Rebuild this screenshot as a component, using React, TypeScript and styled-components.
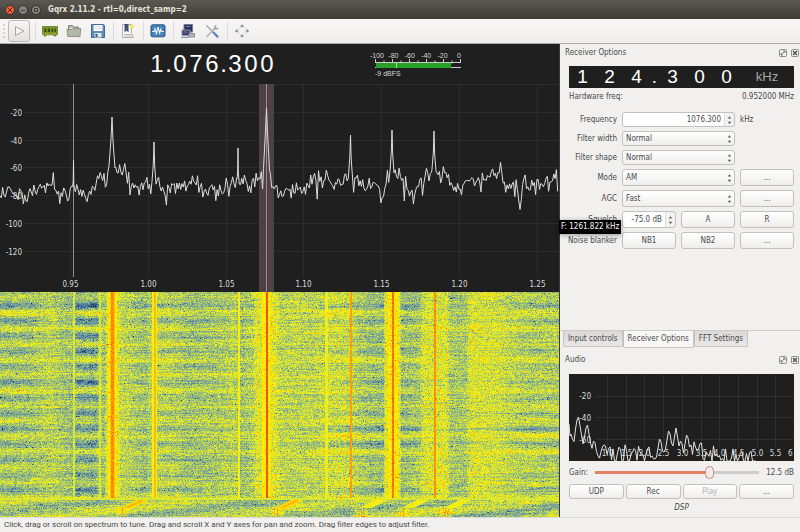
import React, { useId, useLayoutEffect, useRef, useState } from "react";
import styled, { createGlobalStyle, css } from "styled-components";

const UI_FONT = '"DejaVu Sans Condensed", "DejaVu Sans", sans-serif';
const LCD_FONT = '"Liberation Sans", Arial, sans-serif';
const DARK = "#1f1f1f";

const GlobalStyle = createGlobalStyle`
  * { box-sizing: border-box; }
  body { margin: 0; background: #f1f0ef; color: #4a4a4a; font: 8px/10px ${UI_FONT}; }
  button, input, select { font: inherit; color: inherit; margin: 0; padding: 0; }
`;

/* ---------- deterministic noise ---------- */

function makeRandom(seed: number) {
  let s = seed;
  return () => {
    s = (s + 0x6d2b79f5) | 0;
    let t = Math.imul(s ^ (s >>> 15), 1 | s);
    t = (t + Math.imul(t ^ (t >>> 7), 61 | t)) ^ t;
    return ((t ^ (t >>> 14)) >>> 0) / 4294967296;
  };
}

type Point = [number, number];

function interpolate(points: Point[], x: number) {
  for (let i = 1; i < points.length; i++) {
    const [x0, y0] = points[i - 1];
    const [x1, y1] = points[i];
    if (x <= x1) return y0 + ((y1 - y0) * (x - x0)) / (x1 - x0);
  }
  return points[points.length - 1][1];
}

/* ---------- window frame ---------- */

const Window = styled.div`
  display: flex;
  flex-direction: column;
  min-height: 100vh;
`;

const TitleBar = styled.header`
  display: flex;
  align-items: center;
  gap: 3px;
  height: 19px;
  padding-left: 5px;
  background: linear-gradient(#5a5850, #3d3c37);
  color: #e6e2da;
`;

const Title = styled.h1`
  margin: 0 0 0 4px;
  font-size: 8px;
  font-weight: 700;
`;

const WindowButton = styled.button<{ $close?: boolean }>`
  display: grid;
  place-items: center;
  width: 10px;
  height: 10px;
  border: 1px solid #35342f;
  border-radius: 50%;
  background: ${p => (p.$close ? "#ec5f3b" : "#84827a")};
  color: ${p => (p.$close ? "#6b2413" : "#3c3b37")};
`;

const ToolBar = styled.nav`
  display: flex;
  align-items: center;
  height: 25px;
  padding-left: 3px;
  border-bottom: 1px solid #a9aca8;
  background: linear-gradient(#f8f7f6, #efeeed);
`;

const Handle = styled.span`
  width: 2px;
  height: 14px;
  margin-right: 3px;
  border-left: 2px dotted #d4d2d0;
`;

const PlayButton = styled.button`
  display: grid;
  place-items: center;
  width: 22px;
  height: 22px;
  margin-right: 2px;
  border: 1px solid #bcbab8;
  border-radius: 3px;
  background: linear-gradient(#f7f6f5, #e2e1e0);
`;

const ToolButton = styled.button`
  display: grid;
  place-items: center;
  width: 24px;
  height: 22px;
  border: 0;
  background: none;
`;

const Separator = styled.span`
  width: 1px;
  height: 20px;
  margin: 0 2px 0 3px;
  background: #dddbd9;
`;

const Workspace = styled.main`
  display: grid;
  flex: 1;
  grid-template-columns: minmax(0, 1fr) 240px;
`;

const Receiver = styled.section`
  display: flex;
  flex-direction: column;
  min-width: 0;
  border-right: 1px solid #3a3a3a;
  background: ${DARK};
`;

const TuningRow = styled.div`
  display: flex;
  align-items: center;
  gap: 91px;
  height: 40px;
  padding-left: 149px;
  color: #fff;
  font-family: ${LCD_FONT};
`;

const Digits = styled.div`
  display: flex;
  font-size: 24px;
  line-height: 28px;
`;

const Digit = styled.span<{ $dot: boolean }>`
  width: ${p => (p.$dot ? 7 : 16)}px;
  text-align: center;
`;

const MeterSvg = styled.svg`
  display: block;
  width: 98px;
  height: 32px;
  flex: none;
`;

const PlotSvg = styled.svg`
  display: block;
  width: 100%;
  height: auto;
`;

const WaterfallCanvas = styled.canvas`
  display: block;
  flex: 1 1 225px;
  width: 100%;
  min-height: 0;
`;

const StatusBar = styled.footer`
  height: 15px;
  padding: 2px 4px;
  border-top: 1px solid #dcdad8;
  font-family: Roboto, sans-serif;
  white-space: nowrap;
  overflow: hidden;
`;

/* ---------- dock panels ---------- */

const Docks = styled.aside`
  position: relative;
  display: flex;
  flex-direction: column;
  justify-content: space-between;
`;

const Dock = styled.section`
  padding: 0 6px 0 9px;
`;

const DockHeader = styled.header`
  display: flex;
  align-items: center;
  gap: 4px;
  height: 18px;
  margin: 0 -5px 0 -4px;
`;

const DockTitle = styled.h2`
  flex: 1;
  margin: 0;
  font-size: 8px;
  font-weight: 400;
`;

const DockButton = styled.button`
  width: 8px;
  height: 8px;
  border: 0;
  background: none;
  line-height: 0;
`;

const Lcd = styled.div`
  display: grid;
  grid-template-columns: repeat(3, 12fr) 4fr repeat(3, 12fr) 24fr;
  align-items: center;
  height: 22px;
  margin-top: 4px;
  background: ${DARK};
  color: #fff;
  font: 19px/22px ${LCD_FONT};
  text-align: center;
`;

const LcdUnit = styled.span`
  color: #a5a5a5;
  font-size: 13px;
`;

const HardwareRow = styled.div`
  display: flex;
  justify-content: space-between;
  height: 24px;
  padding-top: 4px;
`;

const Form = styled.form`
  display: grid;
  grid-template-columns: 48px repeat(3, minmax(0, 1fr));
  grid-template-rows: repeat(3, 15px) repeat(4, 17px);
  gap: 4px 5px;
  align-items: center;
`;

const Label = styled.label`
  grid-column: 1;
  justify-self: end;
  white-space: nowrap;
`;

const fieldFrame = css`
  border: 1px solid #c3c1bf;
  border-radius: 3px;
`;

const Field = styled.span<{ $span?: number }>`
  position: relative;
  display: flex;
  grid-column: span ${p => p.$span || 1};
  height: 100%;
  svg { position: absolute; right: 3px; top: calc(50% - 5px); pointer-events: none; }
`;

const Select = styled.select`
  ${fieldFrame}
  width: 100%;
  height: 100%;
  padding: 0 12px 0 3px;
  appearance: none;
  background: linear-gradient(#ffffff, #f0efee);
`;

const SpinInput = styled.input`
  ${fieldFrame}
  width: 100%;
  height: 100%;
  padding-right: 13px;
  background: linear-gradient(to left, #f2f1f0 9px, #dddbd9 9px, #dddbd9 10px, #fff 10px);
  text-align: right;
`;

const Button = styled.button`
  ${fieldFrame}
  width: 100%;
  height: 100%;
  background: linear-gradient(#ffffff, #efeeed);
  &:disabled { color: #b4b2b0; }
`;

const TabList = styled.div`
  display: flex;
  align-items: flex-start;
  height: 21px;
  padding-left: 3px;
  border-top: 1px solid #cfcdcb;
`;

const Tab = styled.button<{ $active: boolean }>`
  height: ${p => (p.$active ? 17 : 16)}px;
  padding: 0 4px;
  border: 1px solid #c5c3c1;
  border-top: 0;
  border-radius: 0 0 2px 2px;
  background: ${p => (p.$active ? "#f8f7f6" : "linear-gradient(#dbd9d7, #e9e8e7)")};
  white-space: nowrap;
`;

const Tooltip = styled.div`
  position: absolute;
  top: 176px;
  left: -1px;
  padding: 2px 2px;
  background: #000;
  box-shadow: 0 1px 5px rgba(0, 0, 0, 0.4);
  color: #fff;
  white-space: nowrap;
`;

const AudioPlot = styled(PlotSvg)`
  margin-top: 5px;
  background: ${DARK};
`;

const GainRow = styled.div`
  display: flex;
  align-items: center;
  gap: 7px;
  height: 23px;
`;

const Slider = styled.input`
  flex: 1;
  min-width: 0;
  height: 14px;
  appearance: none;
  background: linear-gradient(to right, #e58065 var(--fill), #cfcdcb var(--fill)) center / 100% 3px no-repeat;
  &::-webkit-slider-thumb {
    appearance: none;
    width: 9px;
    height: 13px;
    border: 1px solid #c08c80;
    border-radius: 5px;
    background: #f3ebe9;
  }
`;

const ButtonRow = styled.div`
  display: grid;
  grid-template-columns: repeat(4, minmax(0, 1fr));
  gap: 2px;
  height: 15px;
`;

const DspButton = styled.button`
  display: block;
  width: 100%;
  height: 18px;
  border: 0;
  background: none;
  font-style: italic;
`;

/* ---------- icons ---------- */

const Icon = ({ children, size = 16 }: { children: React.ReactNode; size?: number }) => (
  <svg width={size} height={size} viewBox="0 0 16 16" fill="none" aria-hidden="true">{children}</svg>
);

const PlayIcon = () => <Icon><path d="M4.5 3.5 13 8l-8.500 4.500z" fill="#f5f5f5" stroke="#a5a5a5" /></Icon>;

const ChipIcon = () => (
  <Icon>
    <path d="M.5 3.500h15v8h-1.500v1.500h-2v-1.200H4V13H2v-1.500H.5z" fill="#789623" stroke="#59731a" strokeWidth=".7" />
    <path d="M2.500 5.500h2v3.500h-2zM6 5.500h2v3.500H6zM9.500 5.500h1.700v3.500H9.500zM12.500 5.500H14v3.500h-1.500z" fill="#394c12" />
    <path d="M1 11h13" stroke="#c9c34b" strokeDasharray="1 1" />
  </Icon>
);

const FolderIcon = () => (
  <Icon>
    <path d="M2.500 12V2.500h4l1 1.500h5v8z" fill="#b8bbb0" stroke="#80857a" />
    <path d="M4 5.500h8" stroke="#eceee8" />
    <path d="M.8 6.500H6l1-1h7.800l-.8 8H1.800z" fill="#b0b9a5" stroke="#7d8675" strokeWidth=".8" />
  </Icon>
);

const SaveIcon = () => (
  <Icon>
    <path d="M1.500 1.500h12l1 1v12h-13z" fill="#5f8cba" stroke="#41699a" />
    <path d="M3.500 2h9v6h-9z" fill="#fff" />
    <path d="M4.500 3.500h7m-7 2h7" stroke="#d6dde5" />
    <path d="M4.500 10h7v4.500h-7z" fill="#e4e8ec" />
    <path d="M5.500 11h2v3h-2z" fill="#335c89" />
  </Icon>
);

const BookmarkIcon = () => (
  <Icon>
    <path d="M2.500 1.500h9v9l2 4h-11z" fill="#f7f7f5" stroke="#a2a29c" strokeWidth=".8" />
    <path d="M4.500 1h4v8.500l-2-2-2 2z" fill="#3f4f76" />
    <path d="m12 .5.9 1.800 2 .3-1.500 1.400.4 2-1.800-1-1.800 1 .4-2L9.200 2.600l2-.3z" fill="#f4e94b" />
    <path d="M4 11.500h7m-7 1.500h8" stroke="#bcbcb7" />
  </Icon>
);

const WaveIcon = () => (
  <Icon>
    <rect x="1" y="1.800" width="14" height="12" rx="1.500" fill="#4179b2" stroke="#2b568b" />
    <path d="M2 5h12M2 11h12M5 2.500v11M11 2.500v11" stroke="#6e9dca" strokeWidth=".6" />
    <path d="M2 8.500h2l1-2.500 1.500 4.500L8 4l1.500 6 1.300-3.500 1 2H14" stroke="#f2f8ff" strokeWidth="1.100" />
  </Icon>
);

const MonitorsIcon = () => (
  <Icon>
    <path d="M4 1.500h8.500v7.500H4z" fill="#2b3461" stroke="#777986" />
    <path d="M2 7h8v5.500H2z" fill="#3f4374" stroke="#8d8e98" />
    <path d="M9 10.500h5.500V14H9z" fill="#b5b6ba" stroke="#8b8c90" />
    <path d="M1 14.300h8M6 3.500h4.500M4 9h3" stroke="#7580b5" />
  </Icon>
);

const ToolsIcon = () => (
  <Icon>
    <path d="m2.500 2.500 6 6" stroke="#9da2a6" strokeWidth="1.100" strokeLinecap="round" />
    <path d="m9.500 9.500 4 4.200" stroke="#5d8ac2" strokeWidth="2.400" strokeLinecap="round" />
    <path d="M3 13.500 11 5" stroke="#b2b7b8" strokeWidth="1.800" strokeLinecap="round" />
    <path d="M10 5.500c-.5-2 .8-3.500 2.500-3.800L11.800 4l1 .9 2-.7c-.2 1.900-2 2.900-3.800 2.500" fill="#a6abaa" />
  </Icon>
);

const FullscreenIcon = () => (
  <Icon>
    <path d="M8 1.200 6 3.700h4zM8 14.800l-2-2.500h4zM.8 8l2.700-2v4zM15.200 8l-2.700-2v4z" fill="#76819a" />
    <circle cx="8" cy="8" r="3.600" stroke="#bcc3cd" strokeWidth=".8" strokeDasharray="1 1" />
  </Icon>
);

const FloatIcon = () => (
  <Icon size={8}>
    <rect x="1" y="1" width="14" height="14" rx="2" stroke="#777" strokeWidth="1.600" />
    <path d="M8 4h4v4M4 8v4h4M12 4l-8 8" stroke="#666" strokeWidth="1.600" />
  </Icon>
);

const CloseIcon = () => (
  <Icon size={8}>
    <rect x="1" y="1" width="14" height="14" rx="2" stroke="#777" strokeWidth="1.600" />
    <path d="m4 4 8 8m0-8-8 8" stroke="#444" strokeWidth="2.400" />
  </Icon>
);

const Arrows = () => (
  <svg width="5" height="10" viewBox="0 0 5 10" aria-hidden="true">
    <path d="M.8 3.500 2.500 1.200l1.700 2.300zM.8 6.800h3.400L2.500 9z" fill="#5a5a5a" />
  </svg>
);

const WindowGlyph = ({ d }: { d: string }) => (
  <svg width="6" height="6" viewBox="0 0 6 6" aria-hidden="true"><path d={d} fill="none" stroke="currentColor" /></svg>
);

/* ---------- signal meter ---------- */

function SignalMeter() {
  return (
    <MeterSvg viewBox="0 0 98 32" role="img" aria-label="Signal level">
      <g fill="#d8d8d8" fontSize="7" textAnchor="middle" fontFamily={LCD_FONT}>
        {[-100, -80, -60, -40, -20, 0].map((v, i) => (
          <text key={v} x={11 + i * 16.400} y="10">{v}</text>
        ))}
      </g>
      <path
        d={Array.from({ length: 11 }, (_, i) => `M${9.500 + i * 8.500} ${i % 2 ? 12.500 : 11}v3`).join("") + "M9 14.500h86M9 19.500h86"}
        stroke="#c9c9c9"
      />
      <path d="M10 15h75v5H10z" fill="#27a127" />
      <path d="M30.500 14v6" stroke="#a9e080" />
      <text x="9" y="28" fill="#d8d8d8" fontSize="7" fontFamily={LCD_FONT}>-9 dBFS</text>
    </MeterSvg>
  );
}

/* ---------- spectrum ---------- */

const FLOOR: Point[] = [
  [0, 110], [12, 107], [18, 114], [30, 110], [38, 103], [45, 101], [54, 96], [59, 109], [68, 112], [74, 106], [84, 110],
  [94, 109], [98, 90], [103, 97], [109, 86], [117, 86], [121, 95], [125, 84], [130, 98], [140, 103], [150, 101],
  [160, 102], [170, 104], [180, 99], [195, 98], [205, 110], [220, 104], [235, 100], [243, 97], [250, 106], [258, 94],
  [262, 86], [270, 90], [276, 106], [285, 108], [296, 107], [310, 97], [325, 93], [337, 101], [345, 92], [356, 98],
  [370, 104], [382, 110], [387, 90], [399, 92], [405, 98], [412, 107], [420, 100], [425, 90], [443, 88], [450, 96],
  [460, 108], [466, 95], [480, 97], [488, 94], [501, 86], [506, 106], [512, 100], [520, 108], [526, 98], [535, 102],
  [550, 101], [556, 92], [560, 110],
];

const CARRIERS: [number, number, number][] = [
  [73.500, 76, 1], [112, 33, 3], [154, 58, 2], [238, 64, 1], [266.500, 24, 3], [350.500, 51, 2], [392, 46, 2], [434, 47, 2],
];

function buildSpectrum() {
  const random = makeRandom(41);
  const points: Point[] = [];
  for (let x = 0; x <= 559; x += 1.300) {
    const spike = random() > 0.95 ? 10 : 0;
    points.push([x, interpolate(FLOOR, x) + (random() + random() - 1) * 12 + spike]);
  }
  const kept = points.filter(([x]) => !CARRIERS.some(([cx, , w]) => Math.abs(x - cx) < w));
  CARRIERS.forEach(([cx, top, w]) => {
    const base = interpolate(FLOOR, cx);
    kept.push([cx - w, base - 4], [cx - w / 3, top + 22], [cx, top], [cx + w / 3, top + 24], [cx + w, base - 2]);
  });
  kept.sort((a, b) => a[0] - b[0]);
  return "M" + kept.map(([x, y]) => `${x.toFixed(1)} ${y.toFixed(1)}`).join("L");
}

const SPECTRUM_PATH = buildSpectrum();
const MHZ = ["0.95", "1.00", "1.05", "1.10", "1.15", "1.20", "1.25"];
const LEVELS = [-20, -40, -60, -80, -100, -120];

function Spectrum() {
  const gridX = (i: number) => Math.round(70 + i * 77.750) + 0.500;
  const gridY = (i: number) => Math.round(28 + i * 27.700) + 0.500;
  return (
    <PlotSvg viewBox="0 0 559 208" role="img" aria-label="Radio spectrum">
      <path
        d={MHZ.map((_, i) => `M${gridX(i)} 0V193`).join("") + LEVELS.map((_, i) => `M24 ${gridY(i)}H559`).join("") + "M0 .5H559"}
        stroke="#2c2c2c"
      />
      <rect x="259" width="15" height="208" fill="#4d4145" />
      <path d="M266.500 0V208" stroke="#a58a8a" />
      <path d="M73.500 0V193" stroke="#8c9092" />
      <g fill="#dadada" fontSize="8" fontFamily={UI_FONT}>
        {LEVELS.map((v, i) => <text key={v} x="22" y={gridY(i) + 3} textAnchor="end">{v}</text>)}
        {MHZ.map((v, i) => <text key={v} x={gridX(i)} y="203" textAnchor="middle">{v}</text>)}
      </g>
      <path d={SPECTRUM_PATH} fill="none" stroke="#dcdcdc" strokeWidth="1" strokeLinejoin="round" />
    </PlotSvg>
  );
}

/* ---------- waterfall ---------- */

const PALETTE: [number, number, number, number][] = [
  [0, 30, 50, 70], [0.140, 65, 110, 165], [0.300, 110, 155, 160], [0.460, 155, 190, 120],
  [0.600, 208, 226, 60], [0.720, 248, 244, 12], [0.850, 255, 195, 0], [0.930, 255, 140, 0], [1, 240, 80, 15],
];

function paletteColor(value: number) {
  const v = Math.max(0, Math.min(1, value));
  for (let i = 1; i < PALETTE.length; i++) {
    if (v <= PALETTE[i][0]) {
      const a = PALETTE[i - 1];
      const b = PALETTE[i];
      const t = (v - a[0]) / (b[0] - a[0]);
      return [1, 2, 3].map(k => a[k] + (b[k] - a[k]) * t);
    }
  }
  return [240, 80, 15];
}

/* average level of the noise floor along the frequency axis */
const LEVEL: Point[] = [
  [0, 0.480], [30, 0.490], [50, 0.560], [60, 0.510], [72, 0.480], [76, 0.430], [96, 0.430], [99, 0.560], [104, 0.480],
  [107, 0.690], [117, 0.690], [120, 0.580], [128, 0.550], [145, 0.480], [152, 0.570], [160, 0.540], [180, 0.530],
  [185, 0.480], [215, 0.510], [235, 0.560], [240, 0.490], [252, 0.540], [256, 0.660], [275, 0.670], [280, 0.560],
  [310, 0.560], [330, 0.600], [345, 0.600], [355, 0.550], [365, 0.500], [383, 0.460], [385, 0.700], [399, 0.700],
  [401, 0.470], [419, 0.510], [423, 0.630], [446, 0.650], [450, 0.500], [465, 0.510], [470, 0.640], [495, 0.610],
  [510, 0.560], [530, 0.530], [560, 0.530],
];

/* strength of the slow fading bands */
const FADING: Point[] = [
  [0, 0.150], [30, 0.120], [48, 0.050], [74, 0.060], [77, 0.200], [97, 0.200], [100, 0.050], [126, 0.030], [132, 0.080],
  [146, 0.080], [150, 0.040], [160, 0.110], [180, 0.090], [215, 0.050], [240, 0.060], [252, 0.060], [256, 0.010],
  [310, 0.020], [325, 0.070], [383, 0.110], [385, 0], [399, 0], [401, 0.110], [418, 0.080], [424, 0.020],
  [490, 0.020], [515, 0.080], [560, 0.100],
];

/* x, half width, level */
const TRACES: [number, number, number][] = [
  [73.500, 1, 0.620], [112, 4, 0.740], [112, 2, 0.830], [112, 1, 0.930], [154, 2, 0.690], [154.500, 1, 0.860],
  [238.500, 1, 0.730], [266, 4, 0.740], [266.500, 1, 1], [326, 1, 0.680], [350.500, 1, 0.900], [392.500, 5, 0.740],
  [392.500, 1, 0.960], [434.500, 1, 0.920], [99.500, 1, 0.610],
];

function paintWaterfall(ctx: CanvasRenderingContext2D, width: number, height: number) {
  const random = makeRandom(7);
  const image = ctx.createImageData(width, height);
  const shiftRow = 206;
  const bandStrength = Array.from({ length: 20 }, () => [0.500 + random(), 0.300 + random() * 1.300]);
  for (let y = 0; y < height; y++) {
    const shifted = y >= shiftRow;
    const rowJitter = (random() - 0.500) * 0.080;
    const [leftBand, rightBand] = bandStrength[Math.floor((y + 5) / 15.400)];
    const streakStart = random() * width;
    const streakLength = 40 + random() * 80;
    let drift = 0;
    for (let x = 0; x < width; x++) {
      drift = drift * 0.880 + (random() - 0.500) * 0.080;
      const phase = (y * 2 * Math.PI) / 15.400;
      const band = x < 270 ? leftBand : rightBand;
      let v: number;
      if (shifted) {
        v = 0.520 + 0.100 * Math.sin(x / 27 + (y - shiftRow) / 3) + rowJitter;
      } else {
        v = interpolate(LEVEL, x) - interpolate(FADING, x) * band * Math.cos(phase - 5.300) + rowJitter;
      }
      if (x > streakStart && x < streakStart + streakLength) v -= 0.050;
      v += drift + (random() + random() - 1) * 0.210;
      if (random() > 0.970) v -= 0.250;
      if (!shifted) {
        TRACES.forEach(([tx, half, level]) => {
          if (Math.abs(x - tx) <= half) v = Math.max(v, level + (random() - 0.500) * 0.060);
        });
      } else {
        [122, 277, 361, 403, 445].forEach(tx => {
          const distance = Math.abs(x - tx);
          if (y > shiftRow + 9 && distance <= 6) v += 0.120;
          if (y > shiftRow + 9 && distance < 1) v = 0.910;
          const slant = Math.abs(x - (tx + 17 - (y - shiftRow - 3) * 2));
          if (y > shiftRow + 1 && y <= shiftRow + 9 && slant < 7) {
            v = Math.max(v, (tx > 300 ? 0.760 : 0.880) - slant * 0.020 + (random() - 0.500) * 0.080);
          }
        });
        if (y < shiftRow + 2) v = Math.max(v, 0.620);
      }
      const [r, g, b] = paletteColor(v);
      const at = (y * width + x) * 4;
      image.data[at] = r;
      image.data[at + 1] = g;
      image.data[at + 2] = b;
      image.data[at + 3] = 255;
    }
  }
  ctx.putImageData(image, 0, 0);
}

function Waterfall() {
  const ref = useRef<HTMLCanvasElement>(null);
  useLayoutEffect(() => {
    const canvas = ref.current;
    const ctx = canvas?.getContext("2d");
    if (canvas && ctx) paintWaterfall(ctx, canvas.width, canvas.height);
  }, []);
  return <WaterfallCanvas ref={ref} width={559} height={225} role="img" aria-label="Waterfall" />;
}

/* ---------- audio spectrum ---------- */

const AUDIO_ENVELOPE: Point[] = [
  [0, 68], [20, 70], [28, 78], [60, 80], [85, 80], [90, 70], [96, 73], [104, 72], [112, 68], [122, 72], [128, 76],
  [140, 80], [180, 84], [187, 88], [225, 96],
];

const AUDIO_PEAKS: [number, number][] = [[9, 40], [18, 48], [91, 62], [100, 54], [107, 54], [118, 58]];

function buildAudioTrace() {
  const random = makeRandom(19);
  const points: Point[] = [[0, 50], [1, 62]];
  for (let x = 2; x < 187; x += 1.500) {
    const near = AUDIO_PEAKS.find(([px]) => Math.abs(px - x) < 4);
    let y = interpolate(AUDIO_ENVELOPE, x) + (random() - 0.500) * 18;
    if (near) y = near[1] + Math.abs(near[0] - x) * 6;
    points.push([x, Math.min(y, 87)]);
  }
  return "M" + points.map(([x, y]) => `${x} ${y.toFixed(1)}`).join("L");
}

const AUDIO_PATH = buildAudioTrace();
const KHZ = ["1.0", "1.5", "2.0", "2.5", "3.0", "3.5", "4.0", "4.5", "5.0", "5.5"];

function AudioSpectrum() {
  const gridX = (i: number) => Math.round(38 + i * 18.700) + 0.500;
  return (
    <AudioPlot viewBox="0 0 225 87" role="img" aria-label="Audio spectrum">
      <path d={KHZ.map((_, i) => `M${gridX(i)} 0V74`).join("") + "M26 22.500H225M26 43.500H225M26 65.500H225"} stroke="#2f2f2f" />
      <g fill="#dadada" fontSize="8" fontFamily={UI_FONT}>
        {[-20, -40, -60].map((v, i) => <text key={v} x="22" y={25 + i * 22} textAnchor="end">{v}</text>)}
        {KHZ.map((v, i) => <text key={v} x={gridX(i)} y="82" textAnchor="middle">{v}</text>)}
        <text x="219" y="82">6</text>
      </g>
      <path d={AUDIO_PATH} fill="none" stroke="#e2e2e2" />
    </AudioPlot>
  );
}

/* ---------- form parts ---------- */

function Choice({ label, value, options }: { label: string; value: string; options: string[] }) {
  const id = useId();
  return (
    <>
      <Label htmlFor={id}>{label}</Label>
      <Field $span={2}>
        <Select id={id} defaultValue={value}>
          {options.map(o => <option key={o}>{o}</option>)}
        </Select>
        <Arrows />
      </Field>
    </>
  );
}

function Spin({ label, value, span }: { label: string; value: string; span: number }) {
  const id = useId();
  return (
    <>
      <Label htmlFor={id}>{label}</Label>
      <Field $span={span}>
        <SpinInput id={id} defaultValue={value} />
        <Arrows />
      </Field>
    </>
  );
}

function DockTop({ title }: { title: string }) {
  return (
    <DockHeader>
      <DockTitle>{title}</DockTitle>
      <DockButton aria-label={`Float ${title}`}><FloatIcon /></DockButton>
      <DockButton aria-label={`Close ${title}`}><CloseIcon /></DockButton>
    </DockHeader>
  );
}

const TABS = ["Input controls", "Receiver Options", "FFT Settings"];

export default function App() {
  const [tab, setTab] = useState(TABS[1]);
  const [gain, setGain] = useState(12.500);
  const gainPercent = ((gain + 80) / 130) * 100;
  return (
    <Window>
      <GlobalStyle />
      <TitleBar>
        <WindowButton $close aria-label="Close"><WindowGlyph d="m1 1 4 4m0-4L1 5" /></WindowButton>
        <WindowButton aria-label="Minimize"><WindowGlyph d="M1 3.500h4" /></WindowButton>
        <WindowButton aria-label="Maximize"><WindowGlyph d="M1.500 1.500h3v3h-3z" /></WindowButton>
        <Title>Gqrx 2.11.2 - rtl=0,direct_samp=2</Title>
      </TitleBar>
      <ToolBar aria-label="Main toolbar">
        <Handle />
        <PlayButton aria-label="Start DSP"><PlayIcon /></PlayButton>
        <Separator />
        <ToolButton aria-label="Configure I/O devices"><ChipIcon /></ToolButton>
        <ToolButton aria-label="Load settings"><FolderIcon /></ToolButton>
        <ToolButton aria-label="Save settings"><SaveIcon /></ToolButton>
        <Separator />
        <ToolButton aria-label="Add bookmark"><BookmarkIcon /></ToolButton>
        <Separator />
        <ToolButton aria-label="I/Q recorder"><WaveIcon /></ToolButton>
        <Separator />
        <ToolButton aria-label="Remote control"><MonitorsIcon /></ToolButton>
        <ToolButton aria-label="Remote control settings"><ToolsIcon /></ToolButton>
        <Separator />
        <ToolButton aria-label="Full screen"><FullscreenIcon /></ToolButton>
      </ToolBar>
      <Workspace>
        <Receiver>
          <TuningRow>
            <Digits>
              {[..."1.076.300"].map((c, i) => <Digit key={i} $dot={c === "."}>{c}</Digit>)}
            </Digits>
            <SignalMeter />
          </TuningRow>
          <Spectrum />
          <Waterfall />
        </Receiver>
        <Docks>
          <Dock>
            <DockTop title="Receiver Options" />
            <Lcd>
              {[..."124.300"].map((c, i) => <span key={i}>{c}</span>)}
              <LcdUnit>kHz</LcdUnit>
            </Lcd>
            <HardwareRow><span>Hardware freq:</span><span>0.952000 MHz</span></HardwareRow>
            <Form onSubmit={e => e.preventDefault()}>
              <Spin label="Frequency" value="1076.300" span={2} />
              <span>kHz</span>
              <Choice label="Filter width" value="Normal" options={["Wide", "Normal", "Narrow"]} />
              <Choice label="Filter shape" value="Normal" options={["Soft", "Normal", "Sharp"]} />
              <Choice label="Mode" value="AM" options={["AM", "LSB", "USB"]} />
              <Button aria-label="Mode options">...</Button>
              <Choice label="AGC" value="Fast" options={["Fast", "Medium", "Slow"]} />
              <Button aria-label="AGC options">...</Button>
              <Spin label="Squelch" value="-75.0 dB" span={1} />
              <Button>A</Button>
              <Button>R</Button>
              <Label as="span">Noise blanker</Label>
              <Button>NB1</Button>
              <Button>NB2</Button>
              <Button aria-label="Noise blanker options">...</Button>
            </Form>
          </Dock>
          <div>
            <TabList role="tablist">
              {TABS.map(t => (
                <Tab key={t} role="tab" aria-selected={t === tab} $active={t === tab} onClick={() => setTab(t)}>{t}</Tab>
              ))}
            </TabList>
            <Dock>
              <DockTop title="Audio" />
              <AudioSpectrum />
              <GainRow>
                <label htmlFor="gain">Gain:</label>
                <Slider
                  id="gain" type="range" min={-80} max={50} step={0.100} value={gain}
                  onChange={e => setGain(Number(e.target.value))}
                  style={{ "--fill": `${gainPercent}%` } as React.CSSProperties}
                />
                <output htmlFor="gain">{gain.toFixed(1)} dB</output>
              </GainRow>
              <ButtonRow>
                <Button>UDP</Button>
                <Button>Rec</Button>
                <Button disabled>Play</Button>
                <Button aria-label="Audio options">...</Button>
              </ButtonRow>
              <DspButton>DSP</DspButton>
            </Dock>
          </div>
          <Tooltip role="tooltip">F: 1261.822 kHz</Tooltip>
        </Docks>
      </Workspace>
      <StatusBar>
        Click, drag or scroll on spectrum to tune. Drag and scroll X and Y axes for pan and zoom. Drag filter edges to adjust filter.
      </StatusBar>
    </Window>
  );
}
